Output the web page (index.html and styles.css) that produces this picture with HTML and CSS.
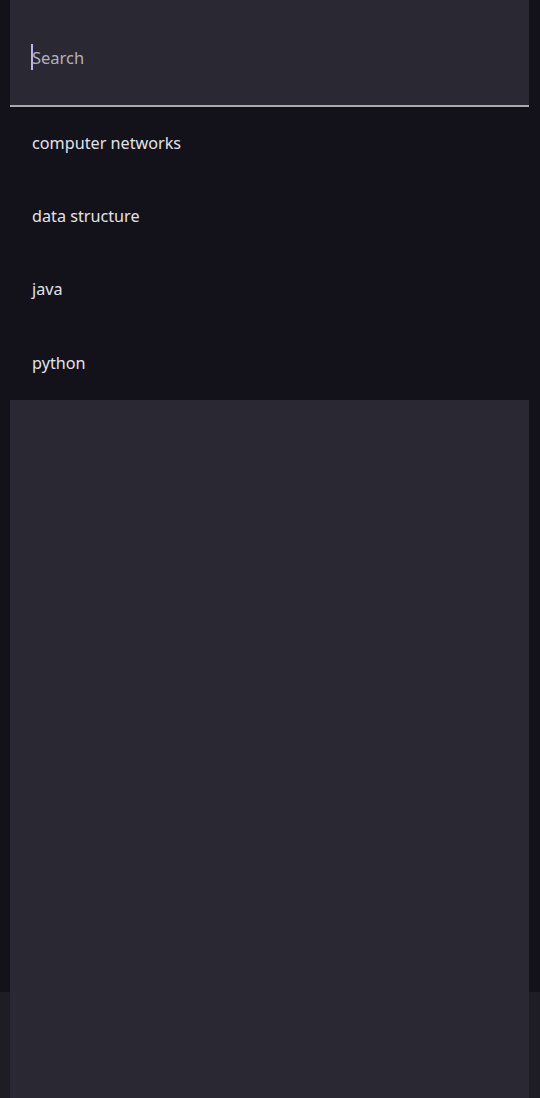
FILE: index.html
```html
<!DOCTYPE html>
<html>
<head>
<meta charset="utf-8">
<link rel="stylesheet" href="styles.css">
</head>
<body>
<div class="screen">
  <div class="sheet">
    <div class="search">
      <span class="cursor"></span><span class="placeholder">Search</span>
    </div>
    <ul class="list">
      <li>computer networks</li>
      <li>data structure</li>
      <li>java</li>
      <li>python</li>
    </ul>
    <div class="panel"></div>
  </div>
  <div class="footer"><div class="footer-inner"></div></div>
</div>
</body>
</html>
```
FILE: styles.css
```css
* { box-sizing: border-box; }
html, body { margin: 0; padding: 0; }
body {
  width: 540px;
  height: 1098px;
  background: #13121b;
  font-family: "Noto Sans", "Open Sans", sans-serif;
  overflow: hidden;
}
.screen {
  display: flex;
  flex-direction: column;
  height: 1098px;
}
.sheet {
  display: flex;
  flex-direction: column;
  height: 992px;
}
.search {
  margin: 0 11px 0 10px;
  height: 107px;
  background: #2a2933;
  border-bottom: 2px solid #a9a8b0;
  display: flex;
  align-items: center;
  padding-left: 21px;
  padding-top: 9px;
}
.cursor {
  width: 2px;
  height: 26px;
  background: #b9b6f2;
  margin-right: -1px;
}
.placeholder {
  font-size: 16.5px;
  color: #b2b1ba;
}
.list {
  list-style: none;
  margin: 0;
  padding: 0;
}
.list li {
  height: 73.3px;
  display: flex;
  align-items: center;
  padding-left: 32px;
  padding-bottom: 2px;
  font-size: 16.2px;
  color: #e3e2e8;
}
.panel {
  flex: 1;
  margin: 0 11px 0 10px;
  background: #2a2933;
}
.footer {
  flex: 1;
  background: #1e1d26;
  padding: 0 11px 0 10px;
  display: flex;
}
.footer-inner {
  flex: 1;
  background: #2a2933;
}
```
